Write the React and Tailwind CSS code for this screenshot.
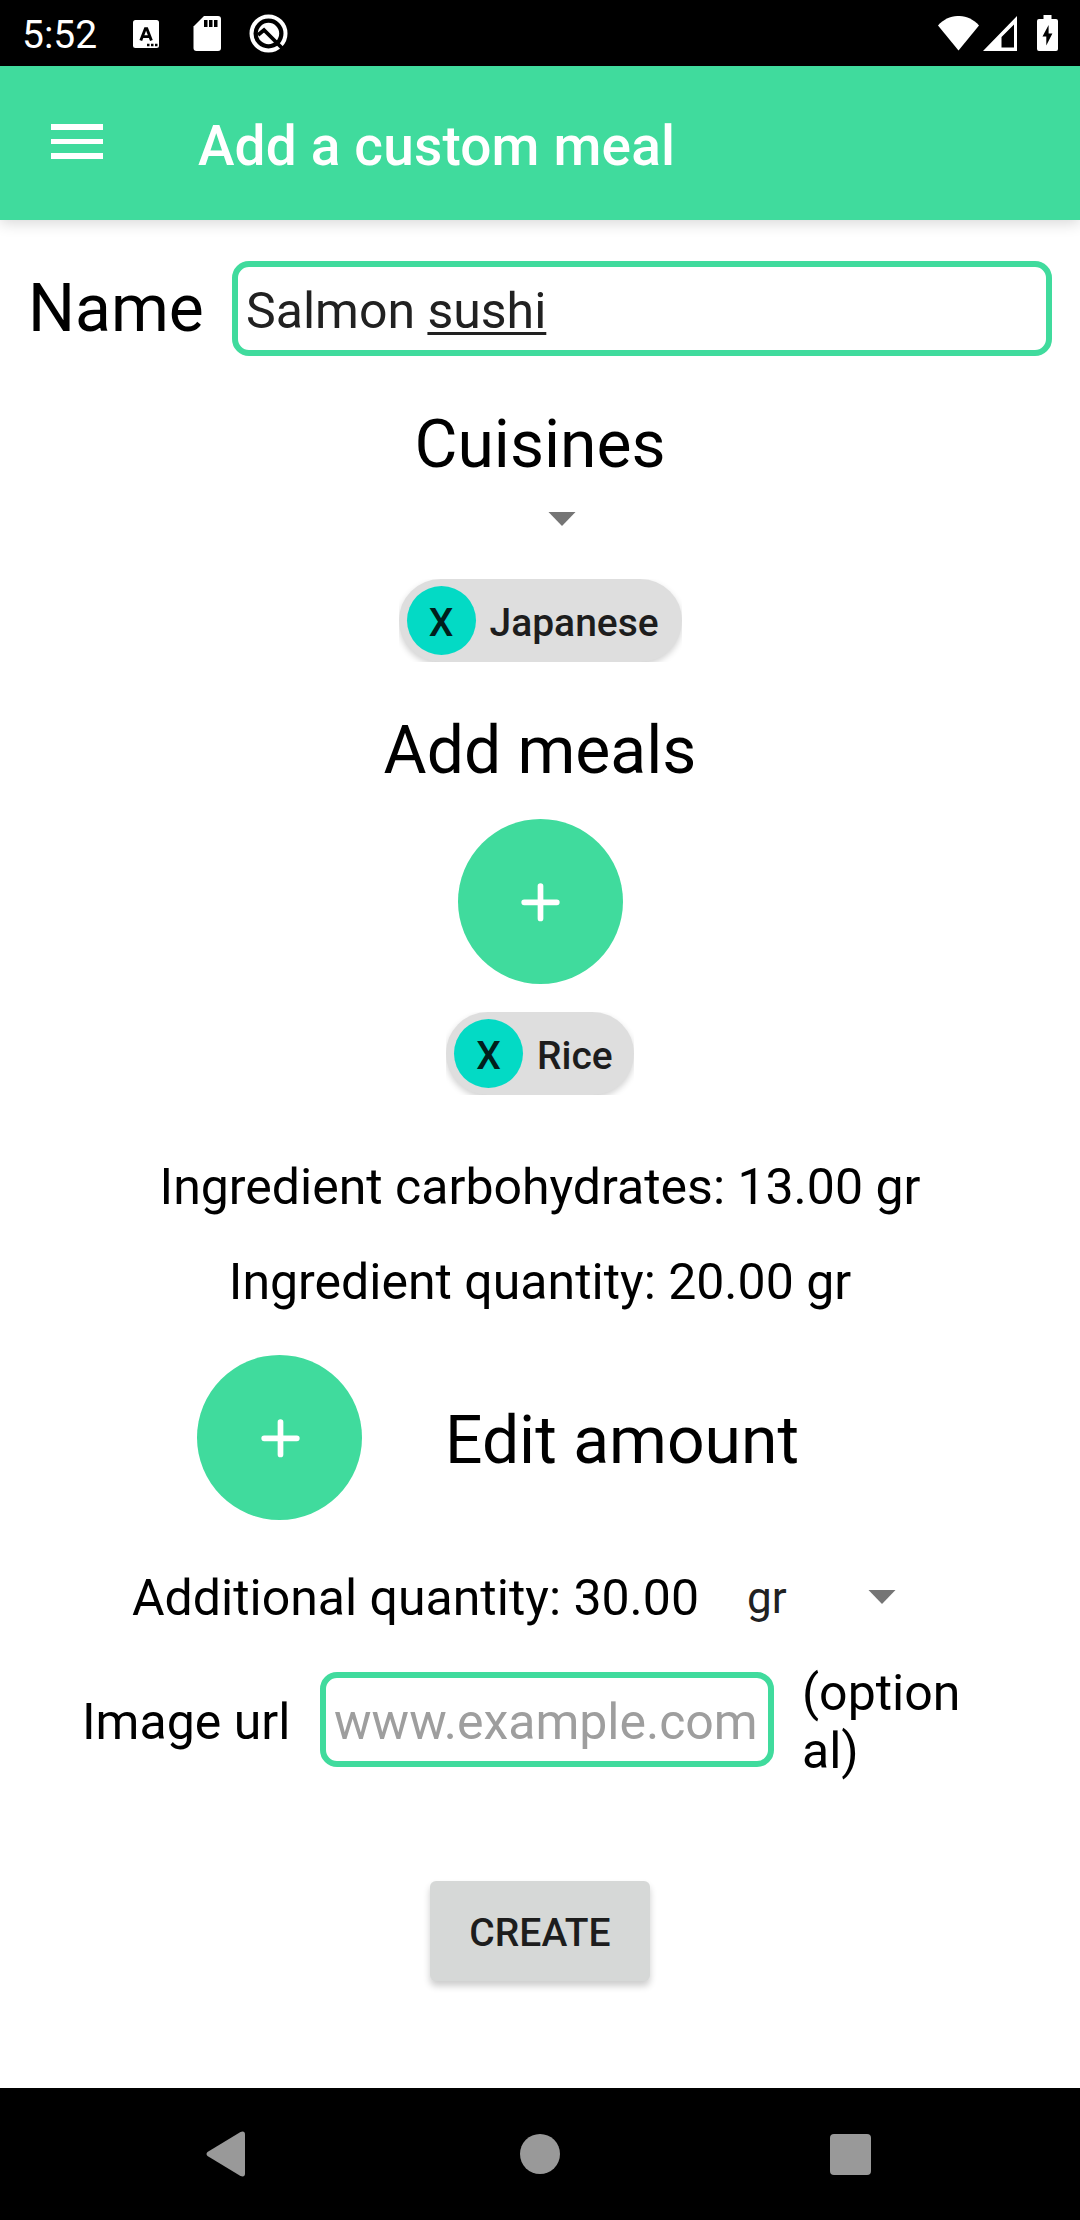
import React from "react";

function StatusBar() {
  return (
    <div className="flex h-[66px] items-center bg-black text-white">
      <span className="ml-[22px] w-[76px] text-[39px] leading-[46px] mt-[4px]">5:52</span>
      <svg className="ml-[35px] mt-[1px]" width="26" height="28" viewBox="0 0 26 28">
        <rect width="26" height="28" rx="2.500" fill="#fff" />
        <path d="M7.800 20.500L12.400 8.600H13.800L18.400 20.500M9.600 16.600H16.600" fill="none" stroke="#000" strokeWidth="2.900" />
        <path d="M14 23.700h2.500v2.500H14zM18 23.700h2.500v2.500H18zM22 23.700h2.500v2.500H22z" fill="#000" />
      </svg>
      <svg className="ml-[34px] mt-px" width="29" height="35" viewBox="0 0 29 35">
        <path d="M11 0H25Q28 0 28 3V32Q28 35 25 35H3.500Q.5 35 .5 32V10.500Z" fill="#fff" />
        <path d="M11 4h3.500v7H11zM16 4h3.500v7H16zM21 4h3.500v7H21z" fill="#000" />
      </svg>
      <svg className="ml-[27px] mt-px" width="39" height="39" viewBox="0 0 39 39">
        <circle cx="19.500" cy="19.500" r="17" fill="none" stroke="#fff" strokeWidth="4" />
        <circle cx="19.500" cy="19.500" r="10.700" fill="#fff" />
        <path d="M9 21L15 16L34 35" fill="none" stroke="#000" strokeWidth="3.800" />
      </svg>
      <svg className="ml-auto" width="41" height="35" viewBox="0 0 41 35">
        <path d="M0 9.500C11-3.200 30-3.200 41 9.500L20.500 34.500Z" fill="#fff" />
      </svg>
      <svg className="ml-[4px]" width="34" height="35" viewBox="0 0 34 35">
        <path d="M0 35L34 0V35ZM18.500 31.500H31V8.500L18.500 21Z" fill="#fff" fillRule="evenodd" />
      </svg>
      <svg className="ml-[20px] mr-[22px]" width="21" height="36" viewBox="0 0 21 36">
        <path d="M6.500 0H14.500V4H19Q21 4 21 6V34Q21 36 19 36H2Q0 36 0 34V6Q0 4 2 4H6.500Z" fill="#fff" />
        <path d="M11.600 10L5.500 21.500H9.300V30.500L15.400 18.500H11.600Z" fill="#000" />
      </svg>
    </div>
  );
}

function Header() {
  return (
    <header className="relative flex h-[154px] items-center bg-[#40DB9D] shadow-[0_3px_14px_rgba(0,0,0,0.16)]">
      <button className="ml-[51px] mb-[11px] mt-[8px] flex w-[52px] flex-col gap-[9px]" aria-label="Menu">
        <span className="h-[5.5px] w-full bg-white" />
        <span className="h-[5.5px] w-full bg-white" />
        <span className="h-[5.5px] w-full bg-white" />
      </button>
      <h1 className="ml-[95px] mt-[6px] text-[55px] font-medium leading-[66px] tracking-[0.15px] text-white">Add a custom meal</h1>
    </header>
  );
}

function Caret() {
  return (
    <svg width="28" height="14" viewBox="0 0 28 14">
      <path d="M0.500 0H27.500L14 14Z" fill="#757575" />
    </svg>
  );
}

function Chip({ label, width }) {
  return (
    <div className={`flex h-[83px] shrink-0 overflow-hidden ${width}`}>
      <div className="flex h-full w-full items-center rounded-full bg-[#DEDEDE] pl-[8px] text-[39px] font-medium leading-[46px] text-[#1d1d1d] shadow-[0_3px_6px_rgba(0,0,0,0.18)]">
        <span className="flex h-[69px] w-[69px] items-center justify-center rounded-full bg-[#03DAC5] pt-[5px] text-[#00201c]">X</span>
        <span className="ml-[14px] pt-[5px]">{label}</span>
      </div>
    </div>
  );
}

function AddButton() {
  return (
    <button className="flex h-[165px] w-[165px] shrink-0 items-center justify-center rounded-full bg-[#40DB9D]" aria-label="Add">
      <svg width="40" height="40" viewBox="0 0 40 40">
        <path d="M20.500 4V36.500M4.200 20.300H36.800" stroke="#fff" strokeWidth="5.700" strokeLinecap="round" />
      </svg>
    </button>
  );
}

function NavBar() {
  return (
    <nav className="mt-auto flex h-[132px] items-center bg-black">
      <svg className="ml-[206px]" width="39" height="46" viewBox="0 0 39 46">
        <path d="M1.500 21Q-.5 23 1.500 25L34.500 45Q39 46.500 39 42.500V3.500Q39-.5 34.500 1Z" fill="#999" />
      </svg>
      <span className="ml-[275px] h-[40px] w-[40px] rounded-full bg-[#999]" />
      <span className="ml-[270px] mt-[1px] h-[41px] w-[41px] rounded-[4px] bg-[#999]" />
    </nav>
  );
}

export default function App() {
  return (
    <div className="flex h-[2220px] w-[1080px] flex-col overflow-hidden bg-white font-['Roboto',sans-serif] text-black">
      <StatusBar />
      <Header />
      <main className="flex flex-col items-center">
        <div className="mt-[41px] flex h-[95px] w-full items-center pl-[28px] pr-[28px]">
          <label className="w-[204px] text-[66px] leading-[78px]">Name</label>
          <div className="flex h-[95px] flex-1 items-center rounded-[17px] border-[6px] border-[#40DB9D] pl-[8px] pt-[5px] text-[50px] leading-[58px] text-[#212121]">
            <span className="whitespace-pre">Salmon </span>
            <span className="underline decoration-[2.5px] underline-offset-[4px] [text-decoration-skip-ink:none]">sushi</span>
          </div>
        </div>

        <h2 className="mt-[50px] text-[66px] leading-[78px]">Cuisines</h2>
        <div className="flex h-[95px] pl-[44px] pt-[28px]">
          <Caret />
        </div>
        <Chip label="Japanese" width="w-[283px]" />

        <h2 className="mt-[50px] text-[66px] leading-[78px]">Add meals</h2>
        <div className="mt-[29px]">
          <AddButton />
        </div>
        <div className="mt-[28px]">
          <Chip label="Rice" width="w-[188px]" />
        </div>

        <p className="mt-[63px] text-[50px] leading-[58px]">Ingredient carbohydrates: 13.00 gr</p>
        <p className="mt-[37px] text-[50px] leading-[58px]">Ingredient quantity: 20.00 gr</p>

        <div className="mt-[44px] flex h-[165px] w-full items-center pl-[197px]">
          <AddButton />
          <span className="ml-[83px] mt-[7px] text-[66px] leading-[78px]">Edit amount</span>
        </div>

        <div className="mt-[49px] flex h-[58px] w-full items-center pl-[132px]">
          <span className="w-[615px] text-[50px] leading-[58px]">Additional quantity: 30.00</span>
          <span className="w-[121px] text-[44px] leading-[52px] text-[#212121]">gr</span>
          <span className="mb-[3px]">
            <Caret />
          </span>
        </div>

        <div className="mt-[37px] flex h-[116px] w-full items-center pl-[82px] text-[50px] leading-[58px]">
          <label className="w-[238px]">Image url</label>
          <input
            className="mb-[5px] h-[95px] w-[454px] rounded-[17px] border-[6px] border-[#40DB9D] pl-[8px] pt-[5px] outline-none placeholder:text-[#9E9E9E]"
            placeholder="www.example.com"
          />
          <span className="ml-[28px] w-[160px] break-all">(optional)</span>
        </div>

        <button className="mt-[101px] h-[100px] w-[220px] rounded-[6px] bg-[#D6D8D7] pt-[4px] text-[39px] font-medium leading-[46px] text-[#1d1d1d] shadow-[0_5px_7px_rgba(0,0,0,0.2)]">
          CREATE
        </button>
      </main>
      <NavBar />
    </div>
  );
}
